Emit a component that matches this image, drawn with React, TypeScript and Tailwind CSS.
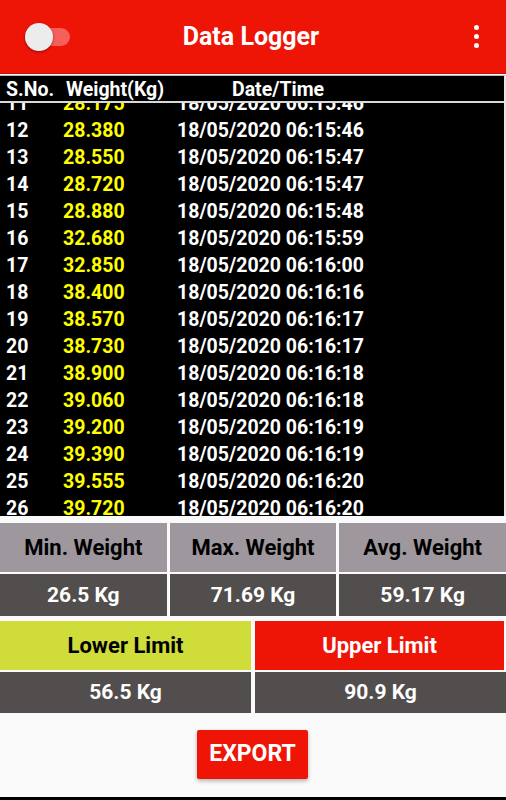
import React from "react";

const ROWS = [
  { n: 11, w: "28.175", t: "18/05/2020 06:15:46" },
  { n: 12, w: "28.380", t: "18/05/2020 06:15:46" },
  { n: 13, w: "28.550", t: "18/05/2020 06:15:47" },
  { n: 14, w: "28.720", t: "18/05/2020 06:15:47" },
  { n: 15, w: "28.880", t: "18/05/2020 06:15:48" },
  { n: 16, w: "32.680", t: "18/05/2020 06:15:59" },
  { n: 17, w: "32.850", t: "18/05/2020 06:16:00" },
  { n: 18, w: "38.400", t: "18/05/2020 06:16:16" },
  { n: 19, w: "38.570", t: "18/05/2020 06:16:17" },
  { n: 20, w: "38.730", t: "18/05/2020 06:16:17" },
  { n: 21, w: "38.900", t: "18/05/2020 06:16:18" },
  { n: 22, w: "39.060", t: "18/05/2020 06:16:18" },
  { n: 23, w: "39.200", t: "18/05/2020 06:16:19" },
  { n: 24, w: "39.390", t: "18/05/2020 06:16:19" },
  { n: 25, w: "39.555", t: "18/05/2020 06:16:20" },
  { n: 26, w: "39.720", t: "18/05/2020 06:16:20" },
  { n: 27, w: "39.880", t: "18/05/2020 06:16:21" },
];

const STATS = [
  { label: "Min. Weight", value: "26.5 Kg" },
  { label: "Max. Weight", value: "71.69 Kg" },
  { label: "Avg. Weight", value: "59.17 Kg" },
];

export default function App() {
  return (
    <div
      className="w-full h-[800px] bg-[#fafafa] flex flex-col overflow-hidden"
      style={{ fontFamily: "Roboto, 'Liberation Sans', sans-serif" }}
    >
      {/* app bar */}
      <div className="h-[74px] shrink-0 bg-[#ee1507] flex items-center border-b border-[#c81206]">
        <div className="ml-[28px] w-[42px] h-[18px] rounded-full bg-[#f5605a] flex items-center">
          <div className="-ml-[3px] w-[28px] h-[28px] rounded-full bg-[#ececec] shadow-[0_1px_3px_rgba(0,0,0,0.4)]" />
        </div>
        <h1 className="flex-1 text-center text-white font-bold text-[25px] pr-[42px]">Data Logger</h1>
        <div className="mr-[27px] flex flex-col gap-[4px]">
          <span className="w-[5px] h-[5px] rounded-full bg-white" />
          <span className="w-[5px] h-[5px] rounded-full bg-white" />
          <span className="w-[5px] h-[5px] rounded-full bg-white" />
        </div>
      </div>

      {/* table */}
      <div className="mt-px h-[441px] shrink-0 bg-black border-t border-[#bdbdbd] border-r-2 border-r-[#e6e6e6] flex flex-col">
        <div className="h-[27px] shrink-0 pt-[3px] flex items-center text-white font-bold text-[19.5px] border-b-2 border-[#d9d9d9] leading-none">
          <span className="ml-[6px] w-[60px]">S.No.</span>
          <span className="w-[166px]">Weight(Kg)</span>
          <span>Date/Time</span>
        </div>
        <div className="flex-1 overflow-hidden">
          <div className="-mt-[13px]">
            {ROWS.map((r) => (
              <div key={r.n} className="h-[27px] flex items-center font-bold text-[19.5px] leading-none">
                <span className="ml-[6px] w-[57px] text-white">{r.n}</span>
                <span className="w-[114px] text-[#ffff00]">{r.w}</span>
                <span className="text-white">{r.t}</span>
              </div>
            ))}
          </div>
        </div>
      </div>

      {/* stats */}
      <div className="mt-[7px] grid grid-cols-3 gap-x-[3px] gap-y-[2px]">
        {STATS.map((s) => (
          <div key={s.label} className="h-[49px] bg-[#9e979d] flex items-center justify-center text-black font-bold text-[22px] leading-none">
            {s.label}
          </div>
        ))}
        {STATS.map((s) => (
          <div key={s.value} className="h-[42px] bg-[#524e4d] flex items-center justify-center text-white font-bold text-[21px] leading-none">
            {s.value}
          </div>
        ))}
      </div>

      {/* limits */}
      <div className="mt-[5px] grid grid-cols-2 gap-x-[4px] gap-y-[2px]">
        <div className="h-[49px] bg-[#cfdc3a] flex items-center justify-center text-black font-bold text-[22px] leading-none">
          Lower Limit
        </div>
        <div className="h-[49px] bg-[#ee1507] flex items-center justify-center text-white font-bold text-[22px] leading-none mr-[2px]">
          Upper Limit
        </div>
        <div className="h-[41px] bg-[#524e4d] flex items-center justify-center text-white font-bold text-[21px] leading-none">
          56.5 Kg
        </div>
        <div className="h-[41px] bg-[#524e4d] flex items-center justify-center text-white font-bold text-[21px] leading-none">
          90.9 Kg
        </div>
      </div>

      {/* export */}
      <div className="flex-1 flex items-start justify-center pt-[17px]">
        <button className="ml-[-1px] w-[111px] h-[49px] bg-[#ee1507] text-white font-bold text-[23px] rounded-[2px] shadow-[0_2px_4px_rgba(0,0,0,0.3)]">
          EXPORT
        </button>
      </div>
      <div className="h-[3px] shrink-0 bg-black" />
    </div>
  );
}
